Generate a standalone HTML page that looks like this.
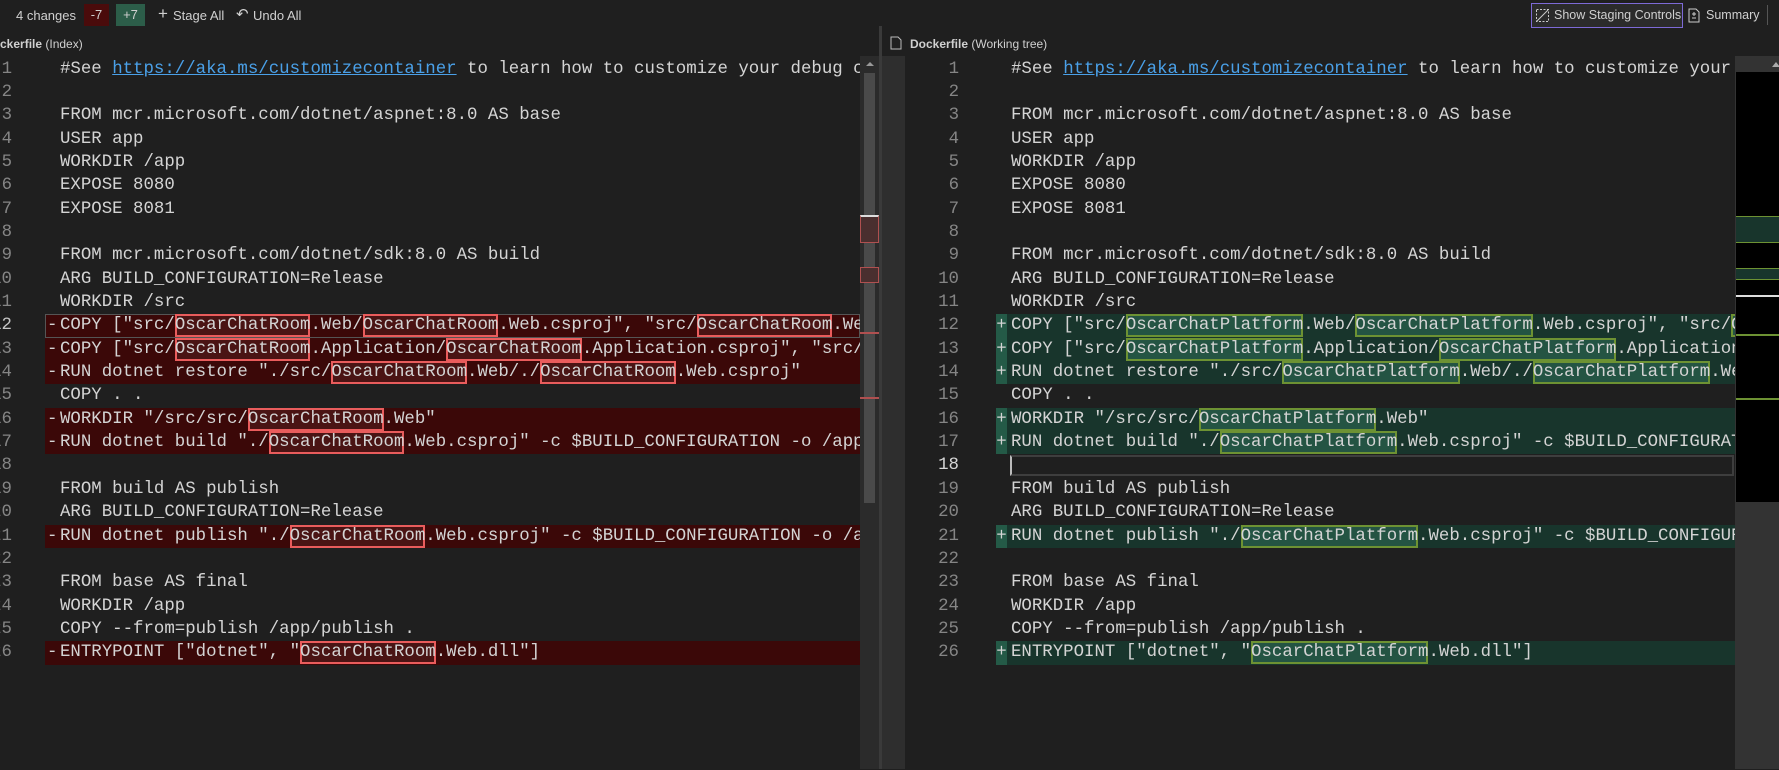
<!DOCTYPE html>
<html><head><meta charset="utf-8"><style>
*{margin:0;padding:0;box-sizing:border-box}
body{width:1779px;height:769px;background:#1f1f1f;overflow:hidden;position:relative;font-family:"Liberation Sans",sans-serif;color:#d4d4d4}
.tb{position:absolute;font-size:13px;top:8px;color:#d0d0d0;white-space:nowrap}
.pane{position:absolute;top:57.5px;height:712px;overflow:hidden}
.row{position:absolute;left:0;right:0;height:23.35px;line-height:23.35px;font-family:"Liberation Mono",monospace;font-size:17.4px;white-space:pre}
.ln{position:absolute;text-align:right;color:#858585;width:60px}
.tx{position:absolute;color:#d4d4d4}
.mk{position:absolute;color:#d4d4d4}
.del{background:#3b0808}
.add{background:#18352c}
.r{box-shadow:inset 0 0 0 2px #e95c5c;display:inline-block;line-height:23px;height:23px;background:#4a1414}
.g{box-shadow:inset 0 0 0 2px #6d9233;display:inline-block;line-height:23px;height:23px;background:#245443}
a{color:#4aa0e8;text-decoration:underline}
</style></head><body>
<!-- toolbar -->
<div class="tb" style="left:16px">4 changes</div>
<div class="tb" style="left:84px;top:4px;width:25px;height:22px;background:#4a0b0b;text-align:center;line-height:22px">-7</div>
<div class="tb" style="left:116px;top:4px;width:29px;height:22px;background:#2c5d49;text-align:center;line-height:22px">+7</div>
<div class="tb" style="left:158px;font-size:17px;top:4px">+</div>
<div class="tb" style="left:173px">Stage All</div>
<div class="tb" style="left:236px;font-size:15px;top:5px">&#x21B6;</div>
<div class="tb" style="left:253px">Undo All</div>
<div class="tb" style="left:1531px;top:3px;width:152px;height:25px;border:1px solid #7d6ad6;background:#2b2b2b;line-height:23px;padding-left:22px;font-size:12.5px">Show Staging Controls</div>
<svg style="position:absolute;left:1536px;top:9px" width="13" height="13"><rect x="0.5" y="0.5" width="12" height="12" fill="none" stroke="#ccc" stroke-dasharray="2 1.5"/><line x1="1" y1="12" x2="12" y2="1" stroke="#ccc"/></svg>
<svg style="position:absolute;left:1688px;top:8px" width="12" height="15"><path d="M1 1h7l3 3v10H1z" fill="none" stroke="#ccc"/><path d="M4 6h4M6 4v4M4 10h4" stroke="#ccc"/></svg>
<div class="tb" style="left:1706px;font-size:12.5px">Summary</div>
<div style="position:absolute;left:1767px;top:5px;width:1px;height:20px;background:#555"></div>
<!-- titles -->
<div class="tb" style="left:0;top:37px;font-size:12px"><b>ckerfile</b> (Index)</div>
<svg style="position:absolute;left:890px;top:36px" width="12" height="14"><path d="M1 1h7l3 3v9H1z" fill="none" stroke="#bbb"/></svg>
<div class="tb" style="left:910px;top:37px;font-size:12px"><b>Dockerfile</b> (Working tree)</div>

<!-- left pane -->
<div class="pane" style="left:0;width:860px">
<div class="row" style="top:0"><span class="ln" style="left:-48px">1</span><span class="tx" style="left:60px">#See <a>https://aka.ms/customizecontainer</a> to learn how to customize your debug container and how Visual Studio uses this Dockerfile</span></div>
<div class="row" style="top:23.35px"><span class="ln" style="left:-48px">2</span></div>
<div class="row" style="top:46.7px"><span class="ln" style="left:-48px">3</span><span class="tx" style="left:60px">FROM mcr.microsoft.com/dotnet/aspnet:8.0 AS base</span></div>
<div class="row" style="top:70.05px"><span class="ln" style="left:-48px">4</span><span class="tx" style="left:60px">USER app</span></div>
<div class="row" style="top:93.4px"><span class="ln" style="left:-48px">5</span><span class="tx" style="left:60px">WORKDIR /app</span></div>
<div class="row" style="top:116.75px"><span class="ln" style="left:-48px">6</span><span class="tx" style="left:60px">EXPOSE 8080</span></div>
<div class="row" style="top:140.1px"><span class="ln" style="left:-48px">7</span><span class="tx" style="left:60px">EXPOSE 8081</span></div>
<div class="row" style="top:163.45px"><span class="ln" style="left:-48px">8</span></div>
<div class="row" style="top:186.8px"><span class="ln" style="left:-48px">9</span><span class="tx" style="left:60px">FROM mcr.microsoft.com/dotnet/sdk:8.0 AS build</span></div>
<div class="row" style="top:210.15px"><span class="ln" style="left:-48px">10</span><span class="tx" style="left:60px">ARG BUILD_CONFIGURATION=Release</span></div>
<div class="row" style="top:233.5px"><span class="ln" style="left:-48px">11</span><span class="tx" style="left:60px">WORKDIR /src</span></div>
<div class="row del" style="top:256.85px;left:45px;box-shadow:inset 0 0 0 1px #555"><span class="ln" style="left:-93px;color:#c6c6c6">12</span><span class="mk" style="left:2px">-</span><span class="tx" style="left:15px">COPY ["src/<span class="r">OscarChatRoom</span>.Web/<span class="r">OscarChatRoom</span>.Web.csproj", "src/<span class="r">OscarChatRoom</span>.Web/"]</span></div>
<div class="row del" style="top:280.2px;left:45px"><span class="ln" style="left:-93px">13</span><span class="mk" style="left:2px">-</span><span class="tx" style="left:15px">COPY ["src/<span class="r">OscarChatRoom</span>.Application/<span class="r">OscarChatRoom</span>.Application.csproj", "src/<span class="r">OscarChatRoom</span>.Application/"]</span></div>
<div class="row del" style="top:303.55px;left:45px"><span class="ln" style="left:-93px">14</span><span class="mk" style="left:2px">-</span><span class="tx" style="left:15px">RUN dotnet restore "./src/<span class="r">OscarChatRoom</span>.Web/./<span class="r">OscarChatRoom</span>.Web.csproj"</span></div>
<div class="row" style="top:326.9px"><span class="ln" style="left:-48px">15</span><span class="tx" style="left:60px">COPY . .</span></div>
<div class="row del" style="top:350.25px;left:45px"><span class="ln" style="left:-93px">16</span><span class="mk" style="left:2px">-</span><span class="tx" style="left:15px">WORKDIR "/src/src/<span class="r">OscarChatRoom</span>.Web"</span></div>
<div class="row del" style="top:373.6px;left:45px"><span class="ln" style="left:-93px">17</span><span class="mk" style="left:2px">-</span><span class="tx" style="left:15px">RUN dotnet build "./<span class="r">OscarChatRoom</span>.Web.csproj" -c $BUILD_CONFIGURATION -o /app/build</span></div>
<div class="row" style="top:396.95px"><span class="ln" style="left:-48px">18</span></div>
<div class="row" style="top:420.3px"><span class="ln" style="left:-48px">19</span><span class="tx" style="left:60px">FROM build AS publish</span></div>
<div class="row" style="top:443.65px"><span class="ln" style="left:-48px">20</span><span class="tx" style="left:60px">ARG BUILD_CONFIGURATION=Release</span></div>
<div class="row del" style="top:467px;left:45px"><span class="ln" style="left:-93px">21</span><span class="mk" style="left:2px">-</span><span class="tx" style="left:15px">RUN dotnet publish "./<span class="r">OscarChatRoom</span>.Web.csproj" -c $BUILD_CONFIGURATION -o /app/publish /p:UseAppHost=false</span></div>
<div class="row" style="top:490.35px"><span class="ln" style="left:-48px">22</span></div>
<div class="row" style="top:513.7px"><span class="ln" style="left:-48px">23</span><span class="tx" style="left:60px">FROM base AS final</span></div>
<div class="row" style="top:537.05px"><span class="ln" style="left:-48px">24</span><span class="tx" style="left:60px">WORKDIR /app</span></div>
<div class="row" style="top:560.4px"><span class="ln" style="left:-48px">25</span><span class="tx" style="left:60px">COPY --from=publish /app/publish .</span></div>
<div class="row del" style="top:583.75px;left:45px"><span class="ln" style="left:-93px">26</span><span class="mk" style="left:2px">-</span><span class="tx" style="left:15px">ENTRYPOINT ["dotnet", "<span class="r">OscarChatRoom</span>.Web.dll"]</span></div>
</div>

<!-- left scrollbar & divider -->
<div style="position:absolute;left:860px;top:56px;width:19px;height:713px;background:#2b2b2b"></div>
<div style="position:absolute;left:879px;top:26px;width:3px;height:743px;background:#3a3a3a"></div>
<div style="position:absolute;left:882px;top:56px;width:23px;height:713px;background:#2e2e2e"></div>
<div style="position:absolute;left:864px;top:73px;width:11px;height:430px;background:#4a4a4a"></div>
<div style="position:absolute;left:866px;top:62px;width:0;height:0;border-left:4px solid transparent;border-right:4px solid transparent;border-bottom:4px solid #999"></div>
<div style="position:absolute;left:860px;top:215px;width:19px;height:28px;border:1px solid #b05050;border-top:2px solid #ddd;background:#4a2f2f"></div>
<div style="position:absolute;left:860px;top:267px;width:19px;height:16px;border:1px solid #b05050;background:#4a2f2f"></div>
<div style="position:absolute;left:860px;top:332px;width:19px;height:2px;background:#b05050"></div>
<div style="position:absolute;left:860px;top:397px;width:19px;height:2px;background:#b05050"></div>

<!-- right pane -->
<div class="pane" style="left:905px;width:831px">
<div class="row" style="top:0"><span class="ln" style="left:-6px">1</span><span class="tx" style="left:106px">#See <a>https://aka.ms/customizecontainer</a> to learn how to customize your debug container and how Visual Studio uses this Dockerfile</span></div>
<div class="row" style="top:23.35px"><span class="ln" style="left:-6px">2</span></div>
<div class="row" style="top:46.7px"><span class="ln" style="left:-6px">3</span><span class="tx" style="left:106px">FROM mcr.microsoft.com/dotnet/aspnet:8.0 AS base</span></div>
<div class="row" style="top:70.05px"><span class="ln" style="left:-6px">4</span><span class="tx" style="left:106px">USER app</span></div>
<div class="row" style="top:93.4px"><span class="ln" style="left:-6px">5</span><span class="tx" style="left:106px">WORKDIR /app</span></div>
<div class="row" style="top:116.75px"><span class="ln" style="left:-6px">6</span><span class="tx" style="left:106px">EXPOSE 8080</span></div>
<div class="row" style="top:140.1px"><span class="ln" style="left:-6px">7</span><span class="tx" style="left:106px">EXPOSE 8081</span></div>
<div class="row" style="top:163.45px"><span class="ln" style="left:-6px">8</span></div>
<div class="row" style="top:186.8px"><span class="ln" style="left:-6px">9</span><span class="tx" style="left:106px">FROM mcr.microsoft.com/dotnet/sdk:8.0 AS build</span></div>
<div class="row" style="top:210.15px"><span class="ln" style="left:-6px">10</span><span class="tx" style="left:106px">ARG BUILD_CONFIGURATION=Release</span></div>
<div class="row" style="top:233.5px"><span class="ln" style="left:-6px">11</span><span class="tx" style="left:106px">WORKDIR /src</span></div>
<div class="row add" style="top:256.85px;left:91px"><span class="ln" style="left:-97px">12</span><span class="mk" style="left:0;width:11px;background:#245a47;text-align:center">+</span><span class="tx" style="left:15px">COPY ["src/<span class="g">OscarChatPlatform</span>.Web/<span class="g">OscarChatPlatform</span>.Web.csproj", "src/<span class="g">OscarChatPlatform</span>.Web/"]</span></div>
<div class="row add" style="top:280.2px;left:91px"><span class="ln" style="left:-97px">13</span><span class="mk" style="left:0;width:11px;background:#245a47;text-align:center">+</span><span class="tx" style="left:15px">COPY ["src/<span class="g">OscarChatPlatform</span>.Application/<span class="g">OscarChatPlatform</span>.Application.csproj", "src/"]</span></div>
<div class="row add" style="top:303.55px;left:91px"><span class="ln" style="left:-97px">14</span><span class="mk" style="left:0;width:11px;background:#245a47;text-align:center">+</span><span class="tx" style="left:15px">RUN dotnet restore "./src/<span class="g">OscarChatPlatform</span>.Web/./<span class="g">OscarChatPlatform</span>.Web.csproj"</span></div>
<div class="row" style="top:326.9px"><span class="ln" style="left:-6px">15</span><span class="tx" style="left:106px">COPY . .</span></div>
<div class="row add" style="top:350.25px;left:91px"><span class="ln" style="left:-97px">16</span><span class="mk" style="left:0;width:11px;background:#245a47;text-align:center">+</span><span class="tx" style="left:15px">WORKDIR "/src/src/<span class="g">OscarChatPlatform</span>.Web"</span></div>
<div class="row add" style="top:373.6px;left:91px"><span class="ln" style="left:-97px">17</span><span class="mk" style="left:0;width:11px;background:#245a47;text-align:center">+</span><span class="tx" style="left:15px">RUN dotnet build "./<span class="g">OscarChatPlatform</span>.Web.csproj" -c $BUILD_CONFIGURATION -o /app/build</span></div>
<div class="row" style="top:396.95px"><span class="ln" style="left:-6px;color:#d6d6d6">18</span><span style="position:absolute;left:105px;right:2px;top:1px;height:21px;border:2px solid #3e3e3e;border-left:2px solid #bbb"></span></div>
<div class="row" style="top:420.3px"><span class="ln" style="left:-6px">19</span><span class="tx" style="left:106px">FROM build AS publish</span></div>
<div class="row" style="top:443.65px"><span class="ln" style="left:-6px">20</span><span class="tx" style="left:106px">ARG BUILD_CONFIGURATION=Release</span></div>
<div class="row add" style="top:467px;left:91px"><span class="ln" style="left:-97px">21</span><span class="mk" style="left:0;width:11px;background:#245a47;text-align:center">+</span><span class="tx" style="left:15px">RUN dotnet publish "./<span class="g">OscarChatPlatform</span>.Web.csproj" -c $BUILD_CONFIGURATION -o /app/publish</span></div>
<div class="row" style="top:490.35px"><span class="ln" style="left:-6px">22</span></div>
<div class="row" style="top:513.7px"><span class="ln" style="left:-6px">23</span><span class="tx" style="left:106px">FROM base AS final</span></div>
<div class="row" style="top:537.05px"><span class="ln" style="left:-6px">24</span><span class="tx" style="left:106px">WORKDIR /app</span></div>
<div class="row" style="top:560.4px"><span class="ln" style="left:-6px">25</span><span class="tx" style="left:106px">COPY --from=publish /app/publish .</span></div>
<div class="row add" style="top:583.75px;left:91px"><span class="ln" style="left:-97px">26</span><span class="mk" style="left:0;width:11px;background:#245a47;text-align:center">+</span><span class="tx" style="left:15px">ENTRYPOINT ["dotnet", "<span class="g">OscarChatPlatform</span>.Web.dll"]</span></div>
</div>

<!-- minimap -->
<div style="position:absolute;left:1735px;top:56px;width:44px;height:713px;background:#333"></div>
<div style="position:absolute;left:1736px;top:72px;width:43px;height:430px;background:#000"></div>
<div style="position:absolute;left:1772px;top:62px;width:0;height:0;border-left:4px solid transparent;border-right:4px solid transparent;border-bottom:5px solid #aaa"></div>
<div style="position:absolute;left:1736px;top:216px;width:43px;height:13px;background:#18352c;border-top:1px solid #6d9233"></div>
<div style="position:absolute;left:1736px;top:229px;width:43px;height:14px;background:#18352c;border-bottom:1px solid #6d9233"></div>
<div style="position:absolute;left:1736px;top:268px;width:43px;height:12px;background:#18352c;border-top:1px solid #6d9233;border-bottom:1px solid #6d9233"></div>
<div style="position:absolute;left:1736px;top:295px;width:43px;height:2px;background:#ddd"></div>
<div style="position:absolute;left:1736px;top:334px;width:43px;height:2px;background:#6d9233"></div>
<div style="position:absolute;left:1736px;top:398px;width:43px;height:2px;background:#6d9233"></div>
</body></html>
